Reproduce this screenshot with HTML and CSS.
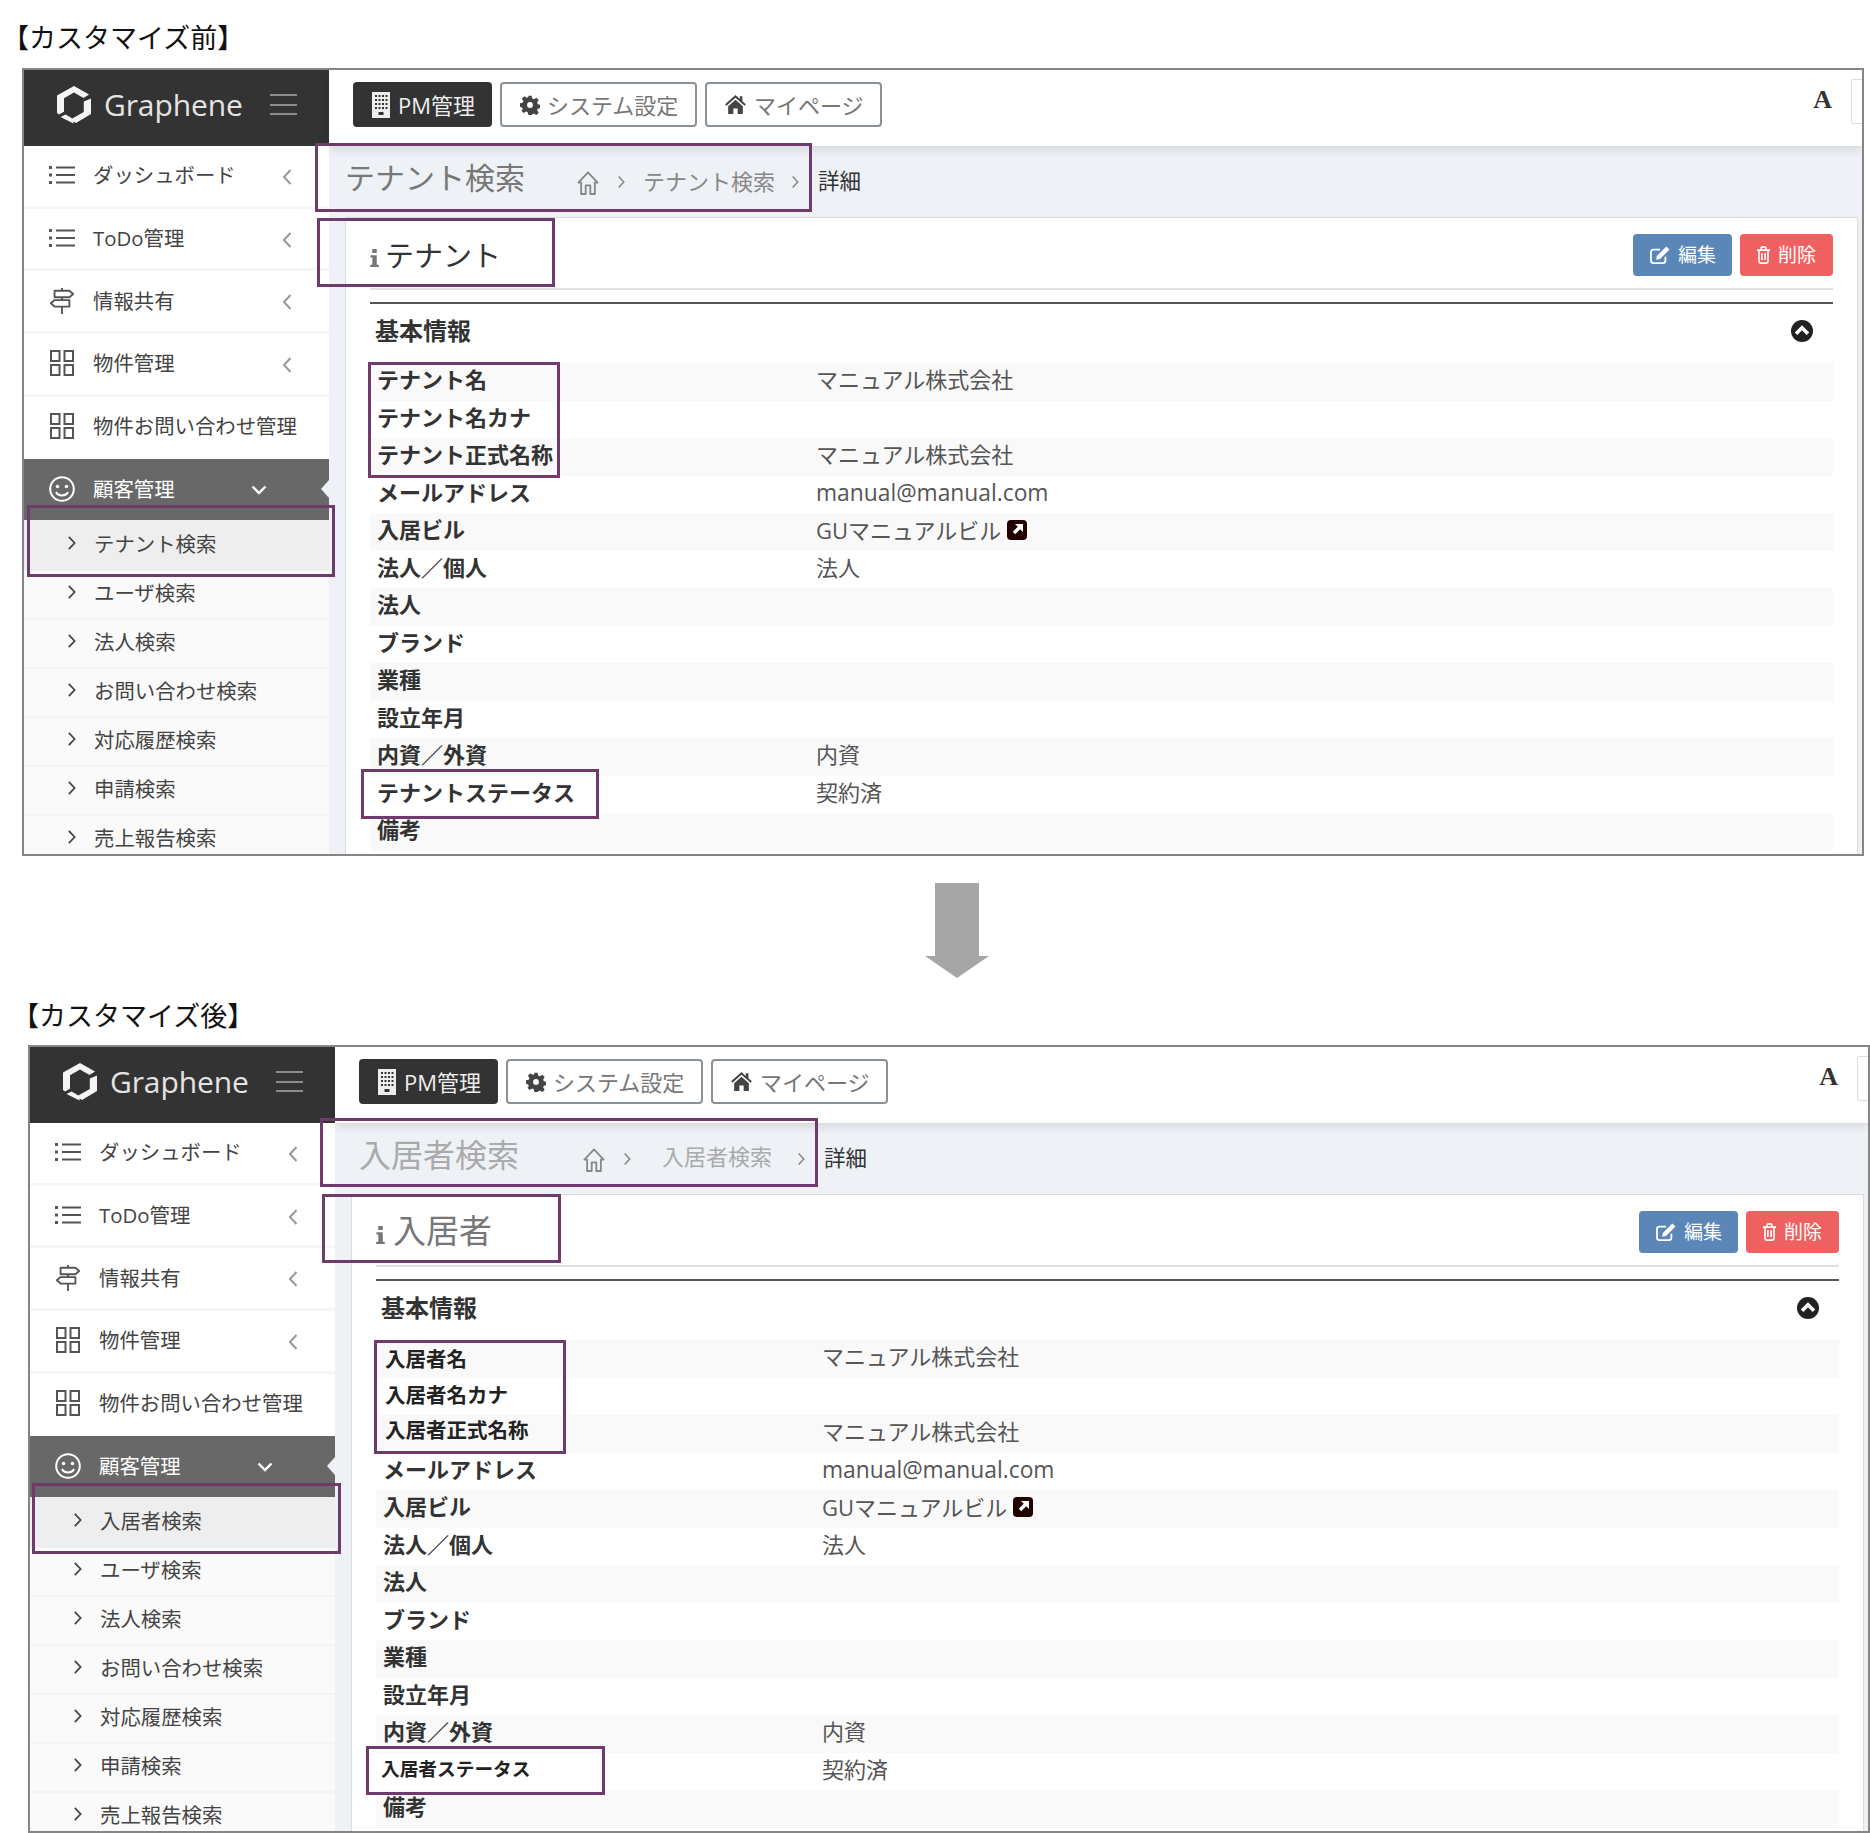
FILE: index.html
```html
<!DOCTYPE html>
<html lang="ja">
<head>
<meta charset="utf-8">
<title>カスタマイズ前後</title>
<link rel="stylesheet" href="styles.css">
</head>
<body>
<svg class="defs" aria-hidden="true">
  <symbol id="i-logo" viewBox="0 0 36 38"><path fill="currentColor" d="M18 0 33 8.600 27.500 12 18 6.500 8 12.300V25.700L3 28.500 1 27V9.500ZM35 12.500V28L20 37 14.500 33.500 27.800 26V15.500ZM4.500 31 9.500 28.500 14 31 17.500 33.400 17.500 37.500 Z"/></symbol>
  <symbol id="i-list" viewBox="0 0 26 20"><path fill="none" stroke="currentColor" stroke-width="2" d="M7 2.500H26M7 10H26M7 17.500H26"/><path fill="currentColor" d="M0 1h3v3H0zM0 8.500h3v3H0zM0 16h3v3H0z"/></symbol>
  <symbol id="i-sign" viewBox="0 0 26 28"><path fill="none" stroke="currentColor" stroke-width="2" stroke-linejoin="round" d="M13 0V3M5 3H21L25 6.500 21 10H5ZM13 10V13M5 13H21V20H5L1 16.500ZM13 20V28"/></symbol>
  <symbol id="i-grid" viewBox="0 0 26 26"><path fill="none" stroke="currentColor" stroke-width="2" d="M2 1h8.500v10H2zM15.500 1H24v10h-8.500zM2 15h8.500v10H2zM15.500 15H24v10h-8.500z"/></symbol>
  <symbol id="i-smile" viewBox="0 0 26 26"><circle cx="13" cy="13" r="11.800" fill="none" stroke="currentColor" stroke-width="2"/><circle cx="8.500" cy="10.500" r="1.800" fill="currentColor"/><circle cx="17.500" cy="10.500" r="1.800" fill="currentColor"/><path fill="none" stroke="currentColor" stroke-width="2" d="M7 16c2 4.500 10 4.500 12 0"/></symbol>
  <symbol id="i-left" viewBox="0 0 10 18"><path fill="none" stroke="currentColor" stroke-width="2" d="M8.500 2 2 9l6.500 7"/></symbol>
  <symbol id="i-right" viewBox="0 0 10 18"><path fill="none" stroke="currentColor" stroke-width="2" d="M2 2l6.500 7L2 16"/></symbol>
  <symbol id="i-down" viewBox="0 0 16 10"><path fill="none" stroke="currentColor" stroke-width="2.400" d="M1.500 1.500 8 8l6.500-6.500"/></symbol>
  <symbol id="i-building" viewBox="0 0 18 26"><path fill="currentColor" fill-rule="evenodd" d="M0 0H18V26H0ZM3 3v2h2V3zM6.500 3v2h2V3zM10 3v2h2V3zM13.500 3v2h2V3zM3 7v2h2V7zM6.500 7v2h2V7zM10 7v2h2V7zM13.500 7v2h2V7zM3 11v2h2v-2zM6.500 11v2h2v-2zM10 11v2h2v-2zM13.500 11v2h2v-2zM3 15v2h2v-2zM6.500 15v2h2v-2zM10 15v2h2v-2zM13.500 15v2h2v-2zM6.500 20v3h5v-3z"/></symbol>
  <symbol id="i-gear" viewBox="0 0 24 24"><path fill="currentColor" fill-rule="evenodd" d="M10 1h4l.7 3.300 2 .8L19.600 3.300l2.800 2.800-1.800 2.900.8 2 3.300.7v4l-3.300.7-.8 2 1.800 2.900-2.800 2.800-2.900-1.800-2 .8L14 24h-4l-.7-3.300-2-.8-2.900 1.800-2.800-2.800L3.400 17l-.8-2L0 14v-4l3.300-.7.8-2L2.300 4.400l2.800-2.800L8 3.400l2-.8ZM12 8.500a3.500 3.500 0 1 0 0 7 3.500 3.500 0 0 0 0-7Z"/></symbol>
  <symbol id="i-house" viewBox="0 0 24 22"><path fill="currentColor" d="M12 0 17 4.500V1.500H20V7.200L24 10.800 22.500 12.400 12 3.200 1.500 12.400 0 10.800ZM12 5.500 20.500 13V22H14.500V15.500H9.500V22H3.500V13Z"/></symbol>
  <symbol id="i-home" viewBox="0 0 24 26"><path fill="none" stroke="currentColor" stroke-width="2" stroke-linejoin="round" d="M1.500 12.500 12 1.500 22.500 12.500H19.500V25H14.500V15.500H9.500V25H4.500V12.500Z"/></symbol>
  <symbol id="i-info" viewBox="0 0 10 20"><path fill="currentColor" d="M2.500 0h5v4.500h-5zM.5 7h7v10.500H9.800V20H.2v-2.500h2.400v-8H.5z"/></symbol>
  <symbol id="i-edit" viewBox="0 0 22 20"><path fill="none" stroke="currentColor" stroke-width="2" d="M17 12V16.500A2.500 2.500 0 0 1 14.500 19H3.500A2.500 2.500 0 0 1 1 16.500V6.500A2.500 2.500 0 0 1 3.500 4H11"/><path fill="currentColor" d="M18 .5 21.500 4 11 14.500 6.800 15.200 7.500 11Z"/></symbol>
  <symbol id="i-trash" viewBox="0 0 18 22"><path fill="none" stroke="currentColor" stroke-width="2" d="M1 5H17M3.500 5V19a2 2 0 0 0 2 2h7a2 2 0 0 0 2-2V5M6 5V3a2 2 0 0 1 2-2h2a2 2 0 0 1 2 2V5M7 9V17M11 9V17"/></symbol>
  <symbol id="i-up" viewBox="0 0 24 24"><circle cx="12" cy="12" r="12" fill="currentColor"/><path fill="none" stroke="#fff" stroke-width="4" d="M5.500 15 12 8.500 18.500 15"/></symbol>
  <symbol id="i-ext" viewBox="0 0 20 20"><rect width="20" height="20" rx="4" fill="currentColor"/><path fill="#fff" d="M8 4h8v8l-2.800-2.800-5 5-2.400-2.400 5-5Z"/></symbol>
</svg>

<section class="block">
  <h2 class="caption">【カスタマイズ前】</h2>
  <div class="panel panel-before">
    <aside class="sidebar">
      <div class="brand">
        <svg class="logo"><use href="#i-logo"/></svg>
        <span class="brand-name">Graphene</span>
        <span class="burger"><i></i><i></i><i></i></span>
      </div>
      <ul class="nav">
        <li class="nav-item"><svg class="nav-ic"><use href="#i-list"/></svg><span class="nav-label">ダッシュボード</span><svg class="nav-chev"><use href="#i-left"/></svg></li>
        <li class="nav-item"><svg class="nav-ic"><use href="#i-list"/></svg><span class="nav-label">ToDo管理</span><svg class="nav-chev"><use href="#i-left"/></svg></li>
        <li class="nav-item"><svg class="nav-ic"><use href="#i-sign"/></svg><span class="nav-label">情報共有</span><svg class="nav-chev"><use href="#i-left"/></svg></li>
        <li class="nav-item"><svg class="nav-ic"><use href="#i-grid"/></svg><span class="nav-label">物件管理</span><svg class="nav-chev"><use href="#i-left"/></svg></li>
        <li class="nav-item"><svg class="nav-ic"><use href="#i-grid"/></svg><span class="nav-label">物件お問い合わせ管理</span></li>
        <li class="nav-item nav-active"><svg class="nav-ic"><use href="#i-smile"/></svg><span class="nav-label">顧客管理</span><svg class="nav-down"><use href="#i-down"/></svg><span class="notch"></span></li>
      </ul>
      <ul class="subnav">
        <li class="sub-item sub-current"><svg class="sub-chev"><use href="#i-right"/></svg>テナント検索</li>
        <li class="sub-item"><svg class="sub-chev"><use href="#i-right"/></svg>ユーザ検索</li>
        <li class="sub-item"><svg class="sub-chev"><use href="#i-right"/></svg>法人検索</li>
        <li class="sub-item"><svg class="sub-chev"><use href="#i-right"/></svg>お問い合わせ検索</li>
        <li class="sub-item"><svg class="sub-chev"><use href="#i-right"/></svg>対応履歴検索</li>
        <li class="sub-item"><svg class="sub-chev"><use href="#i-right"/></svg>申請検索</li>
        <li class="sub-item"><svg class="sub-chev"><use href="#i-right"/></svg>売上報告検索</li>
      </ul>
    </aside>
    <div class="main">
      <header class="topbar">
        <a class="tab tab-dark tab-pm"><svg class="ic-building"><use href="#i-building"/></svg>PM管理</a>
        <a class="tab tab-sys"><svg class="ic-gear"><use href="#i-gear"/></svg>システム設定</a>
        <a class="tab tab-my"><svg class="ic-house"><use href="#i-house"/></svg>マイページ</a>
        <span class="font-a">A</span>
        <span class="cut-box"></span>
      </header>
      <div class="content">
        <div class="crumbs">
          <h1 class="page-title">テナント検索</h1>
          <svg class="ic-home"><use href="#i-home"/></svg>
          <svg class="crumb-sep"><use href="#i-right"/></svg>
          <span class="crumb">テナント検索</span>
          <svg class="crumb-sep"><use href="#i-right"/></svg>
          <span class="crumb-now">詳細</span>
        </div>
        <div class="card">
          <div class="card-head">
            <h2 class="card-title"><svg class="ic-info"><use href="#i-info"/></svg>テナント</h2>
            <div class="actions">
              <a class="act act-edit"><svg class="ic-edit"><use href="#i-edit"/></svg>編集</a>
              <a class="act act-del"><svg class="ic-trash"><use href="#i-trash"/></svg>削除</a>
            </div>
          </div>
          <div class="sec-head"><h3 class="sec-title">基本情報</h3><svg class="ic-up"><use href="#i-up"/></svg></div>
          <dl class="rows">
            <div class="row"><dt>テナント名</dt><dd>マニュアル株式会社</dd></div>
            <div class="row"><dt>テナント名カナ</dt><dd></dd></div>
            <div class="row"><dt>テナント正式名称</dt><dd>マニュアル株式会社</dd></div>
            <div class="row"><dt>メールアドレス</dt><dd class="dd-mail">manual@manual.com</dd></div>
            <div class="row"><dt>入居ビル</dt><dd class="dd-link">GUマニュアルビル<svg class="ic-ext"><use href="#i-ext"/></svg></dd></div>
            <div class="row"><dt>法人／個人</dt><dd>法人</dd></div>
            <div class="row"><dt>法人</dt><dd></dd></div>
            <div class="row"><dt>ブランド</dt><dd></dd></div>
            <div class="row"><dt>業種</dt><dd></dd></div>
            <div class="row"><dt>設立年月</dt><dd></dd></div>
            <div class="row"><dt>内資／外資</dt><dd>内資</dd></div>
            <div class="row"><dt>テナントステータス</dt><dd>契約済</dd></div>
            <div class="row"><dt>備考</dt><dd></dd></div>
          </dl>
        </div>
      </div>
    </div>
    <span class="mark mark-crumbs"></span>
    <span class="mark mark-title"></span>
    <span class="mark mark-menu"></span>
    <span class="mark mark-names"></span>
    <span class="mark mark-status"></span>
  </div>
</section>

<div class="arrow"><span class="arrow-shaft"></span><span class="arrow-head"></span></div>

<section class="block block-after">
  <h2 class="caption">【カスタマイズ後】</h2>
  <div class="panel panel-after">
    <aside class="sidebar">
      <div class="brand">
        <svg class="logo"><use href="#i-logo"/></svg>
        <span class="brand-name">Graphene</span>
        <span class="burger"><i></i><i></i><i></i></span>
      </div>
      <ul class="nav">
        <li class="nav-item"><svg class="nav-ic"><use href="#i-list"/></svg><span class="nav-label">ダッシュボード</span><svg class="nav-chev"><use href="#i-left"/></svg></li>
        <li class="nav-item"><svg class="nav-ic"><use href="#i-list"/></svg><span class="nav-label">ToDo管理</span><svg class="nav-chev"><use href="#i-left"/></svg></li>
        <li class="nav-item"><svg class="nav-ic"><use href="#i-sign"/></svg><span class="nav-label">情報共有</span><svg class="nav-chev"><use href="#i-left"/></svg></li>
        <li class="nav-item"><svg class="nav-ic"><use href="#i-grid"/></svg><span class="nav-label">物件管理</span><svg class="nav-chev"><use href="#i-left"/></svg></li>
        <li class="nav-item"><svg class="nav-ic"><use href="#i-grid"/></svg><span class="nav-label">物件お問い合わせ管理</span></li>
        <li class="nav-item nav-active"><svg class="nav-ic"><use href="#i-smile"/></svg><span class="nav-label">顧客管理</span><svg class="nav-down"><use href="#i-down"/></svg><span class="notch"></span></li>
      </ul>
      <ul class="subnav">
        <li class="sub-item sub-current"><svg class="sub-chev"><use href="#i-right"/></svg>入居者検索</li>
        <li class="sub-item"><svg class="sub-chev"><use href="#i-right"/></svg>ユーザ検索</li>
        <li class="sub-item"><svg class="sub-chev"><use href="#i-right"/></svg>法人検索</li>
        <li class="sub-item"><svg class="sub-chev"><use href="#i-right"/></svg>お問い合わせ検索</li>
        <li class="sub-item"><svg class="sub-chev"><use href="#i-right"/></svg>対応履歴検索</li>
        <li class="sub-item"><svg class="sub-chev"><use href="#i-right"/></svg>申請検索</li>
        <li class="sub-item"><svg class="sub-chev"><use href="#i-right"/></svg>売上報告検索</li>
      </ul>
    </aside>
    <div class="main">
      <header class="topbar">
        <a class="tab tab-dark tab-pm"><svg class="ic-building"><use href="#i-building"/></svg>PM管理</a>
        <a class="tab tab-sys"><svg class="ic-gear"><use href="#i-gear"/></svg>システム設定</a>
        <a class="tab tab-my"><svg class="ic-house"><use href="#i-house"/></svg>マイページ</a>
        <span class="font-a">A</span>
        <span class="cut-box"></span>
      </header>
      <div class="content">
        <div class="crumbs crumbs-edited">
          <h1 class="page-title">入居者検索</h1>
          <svg class="ic-home"><use href="#i-home"/></svg>
          <svg class="crumb-sep"><use href="#i-right"/></svg>
          <span class="crumb">入居者検索</span>
          <svg class="crumb-sep"><use href="#i-right"/></svg>
          <span class="crumb-now">詳細</span>
        </div>
        <div class="card">
          <div class="card-head">
            <h2 class="card-title card-title-edited"><svg class="ic-info"><use href="#i-info"/></svg>入居者</h2>
            <div class="actions">
              <a class="act act-edit"><svg class="ic-edit"><use href="#i-edit"/></svg>編集</a>
              <a class="act act-del"><svg class="ic-trash"><use href="#i-trash"/></svg>削除</a>
            </div>
          </div>
          <div class="sec-head"><h3 class="sec-title">基本情報</h3><svg class="ic-up"><use href="#i-up"/></svg></div>
          <dl class="rows">
            <div class="row"><dt class="dt-edited">入居者名</dt><dd>マニュアル株式会社</dd></div>
            <div class="row"><dt class="dt-edited dt-up1">入居者名カナ</dt><dd></dd></div>
            <div class="row"><dt class="dt-edited dt-up2">入居者正式名称</dt><dd>マニュアル株式会社</dd></div>
            <div class="row"><dt>メールアドレス</dt><dd class="dd-mail">manual@manual.com</dd></div>
            <div class="row"><dt>入居ビル</dt><dd class="dd-link">GUマニュアルビル<svg class="ic-ext"><use href="#i-ext"/></svg></dd></div>
            <div class="row"><dt>法人／個人</dt><dd>法人</dd></div>
            <div class="row"><dt>法人</dt><dd></dd></div>
            <div class="row"><dt>ブランド</dt><dd></dd></div>
            <div class="row"><dt>業種</dt><dd></dd></div>
            <div class="row"><dt>設立年月</dt><dd></dd></div>
            <div class="row"><dt>内資／外資</dt><dd>内資</dd></div>
            <div class="row"><dt class="dt-status">入居者ステータス</dt><dd>契約済</dd></div>
            <div class="row"><dt>備考</dt><dd></dd></div>
          </dl>
        </div>
      </div>
    </div>
    <span class="mark mark-crumbs"></span>
    <span class="mark mark-title"></span>
    <span class="mark mark-menu"></span>
    <span class="mark mark-names"></span>
    <span class="mark mark-status"></span>
  </div>
</section>
</body>
</html>
```

FILE: styles.css
```css
* { box-sizing: border-box; }
html, body { margin: 0; padding: 0; }
body {
  width: 1870px;
  height: 1833px;
  overflow: hidden;
  background: #fff;
  color: #444;
  font-family: "Open Sans", "Noto Sans CJK JP", sans-serif;
  font-size: 20px;
}
h1, h2, h3, ul, dl, dt, dd { margin: 0; padding: 0; font-weight: normal; }
ul { list-style: none; }
.defs { display: none; }
svg { display: block; flex: none; }

/* captions and big arrow */
.caption {
  height: 68px;
  padding: 20px 0 0 2px;
  font-size: 27px;
  line-height: 34px;
  color: #111;
  font-family: "Noto Sans CJK JP", sans-serif;
  white-space: nowrap;
}
.block-after .caption { height: 77px; padding: 30px 0 0 12px; }
.arrow { height: 112px; padding: 27px 0 0 925px; }
.arrow-shaft { display: block; width: 44px; height: 73px; margin-left: 10px; background: #a6a6a6; }
.arrow-head {
  display: block;
  width: 0;
  height: 0;
  border-left: 32px solid transparent;
  border-right: 32px solid transparent;
  border-top: 22px solid #a6a6a6;
}

/* panel */
.panel {
  position: relative;
  display: flex;
  width: 1842px;
  height: 788px;
  overflow: hidden;
  border: 2px solid #858585;
  margin-left: 22px;
  background: #fff;
}
.panel-after { margin-left: 28px; }

/* sidebar */
.sidebar { width: 305px; flex: none; background: #fff; }
.brand {
  display: flex;
  align-items: center;
  height: 76px;
  padding: 0 0 7px 32px;
  background: #333;
  color: #fff;
}
.logo { width: 36px; height: 38px; color: #f4f4f4; }
.brand-name { margin-left: 12px; font-size: 30px; line-height: 40px; font-weight: 400; color: #e4e4e4; letter-spacing: -0.1px; }
.burger { display: flex; flex-direction: column; gap: 7.500px; width: 27px; margin-left: 27px; }
.burger i { display: block; height: 2px; background: #8c8c8c; }

.nav-item {
  position: relative;
  display: flex;
  align-items: center;
  height: 62.700px;
  padding: 0 0 1px 25px;
  border-bottom: 3px solid #f6f6f6;
  color: #444;
}
.nav-ic { width: 26px; height: 26px; color: #555; }
.nav-label { margin-left: 18px; font-size: 20.400px; line-height: 28px; white-space: nowrap; }
.nav-chev { position: absolute; left: 258px; top: 22px; width: 10px; height: 18px; color: #999; }
.nav-item:nth-child(5) { border-bottom: 0; padding-bottom: 4px; }
.nav-active { height: 61px; padding-bottom: 2px; background: #686868; color: #fff; border-bottom: 0; }
.nav-active .nav-ic { color: #fff; }
.nav-down { position: absolute; left: 227px; top: 26px; width: 16px; height: 10px; color: #fff; }
.notch {
  position: absolute;
  right: 0;
  top: 21px;
  border-top: 9px solid transparent;
  border-bottom: 9px solid transparent;
  border-right: 8px solid #eef1f6;
}
.subnav { background: #fafafa; }
.sub-item {
  display: flex;
  align-items: center;
  height: 49px;
  padding: 0 0 4px 43px;
  box-shadow: 0 2px 0 #f4f4f4;
  font-size: 20.400px;
  color: #444;
  white-space: nowrap;
}
.sub-chev { width: 9px; height: 16px; margin-right: 18px; color: #444; }
.sub-current { background: #eee; box-shadow: 0 2px 0 #eee; }

/* main column */
.main { flex: 1; min-width: 0; display: flex; flex-direction: column; background: #eef1f6; }
.topbar {
  position: relative;
  display: flex;
  align-items: center;
  gap: 8px;
  height: 76px;
  flex: none;
  padding: 0 0 7px 24px;
  background: #fff;
  box-shadow: 0 3px 10px rgba(0, 0, 0, 0.12);
}
.tab {
  display: flex;
  align-items: center;
  height: 45px;
  border: 2px solid #8a9298;
  border-radius: 4px;
  font-size: 22px;
  line-height: 30px;
  color: #777;
  white-space: nowrap;
}
.tab-dark { background: #333; border-color: #333; color: #eee; }
.tab-pm { width: 139px; padding-left: 17px; }
.tab-sys { width: 197px; padding-left: 18px; }
.tab-my { width: 177px; padding-left: 18px; }
.ic-building { width: 18px; height: 26px; margin-right: 8px; color: #eee; }
.ic-gear { width: 20px; height: 20px; margin-right: 7px; color: #444; }
.ic-house { width: 21px; height: 19px; margin-right: 8px; color: #444; }
.font-a {
  position: absolute;
  right: 30px;
  top: 12px;
  font-family: "Liberation Serif", serif;
  font-weight: bold;
  font-size: 26px;
  line-height: 36px;
  color: #333;
}
.cut-box {
  position: absolute;
  right: -1px;
  top: 9px;
  width: 12px;
  height: 45px;
  border: 1px solid #ddd;
  border-radius: 2px 0 0 2px;
}

.content { flex: 1; min-height: 0; padding: 0 4px 0 16px; }
.crumbs { display: flex; align-items: center; height: 71px; padding-bottom: 4px; white-space: nowrap; }
.page-title { width: 232px; font-size: 30px; line-height: 40px; color: #777; margin-bottom: 4px; }
.ic-home { width: 22px; height: 24px; color: #888; margin-top: 6px; }
.crumb-sep { width: 8px; height: 14px; color: #888; margin-top: 4px; }
.ic-home + .crumb-sep { margin-left: 18px; }
.crumb { margin-left: 18px; font-size: 22px; line-height: 30px; color: #888; margin-top: 2px; }
.crumb + .crumb-sep { margin-left: 16px; }
.crumb-now { margin-left: 19px; font-size: 21.500px; line-height: 30px; color: #333; margin-top: 2px; }
.crumbs-edited .page-title { width: 232px; padding-left: 8px; font-size: 32px; color: #aaa; }
.crumbs-edited .crumb { margin-left: 31px; width: 110px; color: #aaa; margin-top: -2px; }
.crumbs-edited .crumb + .crumb-sep { margin-left: 25px; }

.card { height: 638px; padding: 0 24px; background: #fff; border: 1px solid #dcdcdc; border-bottom: 0; }
.card-head {
  display: flex;
  align-items: flex-start;
  justify-content: space-between;
  height: 72px;
  border-bottom: 2px solid #e0e0e0;
}
.card-title { display: flex; align-items: center; height: 50px; margin-top: 13px; font-size: 29px; line-height: 40px; color: #333; }
.card-title .ic-info { margin-right: 6px; }
.card-title-edited { margin-top: 11px; font-size: 33px; color: #777; }
.card-title-edited .ic-info { margin-right: 8px; margin-top: 7px; }
.ic-info { width: 9px; height: 18px; margin-top: 3px; color: #777; }
.actions { display: flex; gap: 8px; margin-top: 16px; }
.act {
  display: flex;
  align-items: center;
  height: 42px;
  padding-bottom: 1px;
  border-radius: 4px;
  font-size: 19px;
  line-height: 24px;
  color: #fff;
}
.act-edit { width: 99px; padding-left: 17px; background: #5b87b8; }
.act-del { width: 93px; padding-left: 16px; background: #ef6060; }
.ic-edit { width: 20px; height: 18px; margin-right: 8px; color: #fff; }
.ic-trash { width: 15px; height: 18px; margin-right: 7px; color: #fff; }

.sec-head {
  display: flex;
  align-items: center;
  justify-content: space-between;
  height: 61px;
  margin-top: 12px;
  border-top: 2px solid #555;
  padding: 0 20px 6px 5px;
}
.sec-title { font-size: 24px; line-height: 30px; font-weight: 700; color: #333; }
.ic-up { width: 22px; height: 22px; color: #222; }
.row { display: flex; align-items: center; height: 37.500px; white-space: nowrap; }
.row:nth-child(odd) { background: #f9f9f9; }
.row dt { width: 446px; padding: 0 0 5px 7px; font-size: 22px; line-height: 30px; font-weight: 700; color: #333; }
.row dd { display: flex; align-items: center; padding-bottom: 5px; font-size: 22px; line-height: 30px; color: #555; }
.row .dd-mail { padding-bottom: 3px; font-size: 22.800px; }
.row .dd-link { padding-bottom: 3px; }
.row .dt-edited { padding: 1px 0 0 9px; font-size: 20.500px; color: #222; }
.row .dt-up1 { padding: 0 0 3px 9px; line-height: 26px; }
.row .dt-up2 { padding: 0 0 7px 9px; line-height: 24px; }
.row .dt-status { font-size: 18.700px; padding-left: 5px; color: #222; }
.ic-ext { width: 20px; height: 20px; margin-left: 6px; color: #200; }

/* annotation frames */
.mark { position: absolute; border: 3px solid #6f3b6d; pointer-events: none; }
.mark-crumbs { left: 291px; top: 73px; width: 497px; height: 69px; }
.mark-title { left: 293px; top: 148px; width: 238px; height: 69px; }
.mark-menu { left: 3px; top: 435px; width: 308px; height: 72px; }
.mark-names { left: 344px; top: 292px; width: 192px; height: 116px; }
.mark-status { left: 337px; top: 699px; width: 238px; height: 50px; }
.panel-after .mark-crumbs { left: 290px; top: 71px; width: 498px; }
.panel-after .mark-title { left: 292px; top: 147px; width: 239px; }
.panel-after .mark-menu { left: 2px; top: 436px; width: 309px; height: 71px; }
.panel-after .mark-names { top: 293px; height: 114px; }
.panel-after .mark-status { left: 336px; top: 699px; width: 239px; height: 49px; }
```
